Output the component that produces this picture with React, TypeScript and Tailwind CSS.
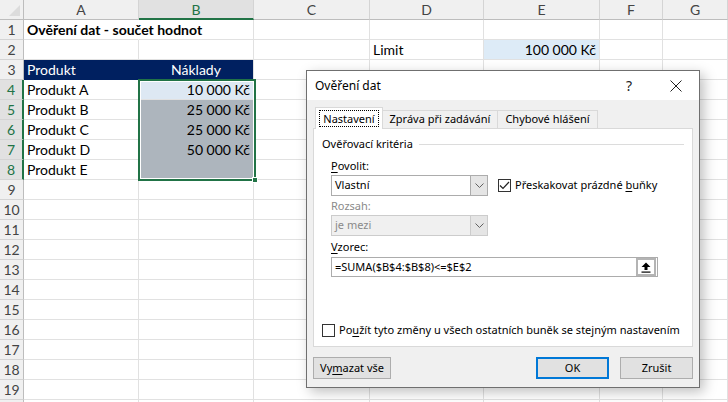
import React from 'react';

const COLS = ['A', 'B', 'C', 'D', 'E', 'F', 'G'];
const ROWS = Array.from({ length: 20 }, (_, i) => i + 1);
const SEL_ROWS = [4, 5, 6, 7, 8];

type Cell = { text?: string; cls?: string };

const cells: Record<string, Cell> = {
  A1: { text: 'Ověření dat - součet hodnot', cls: 'font-bold whitespace-nowrap overflow-visible border-r-transparent' },
  A3: { text: 'Produkt', cls: 'bg-[#002060] text-white border-r-[#002060] border-b-[#002060]' },
  B3: { text: 'Náklady', cls: 'bg-[#002060] text-white justify-center border-b-[#002060]' },
  A4: { text: 'Produkt A' },
  A5: { text: 'Produkt B' },
  A6: { text: 'Produkt C' },
  A7: { text: 'Produkt D' },
  A8: { text: 'Produkt E' },
  B4: { text: '10 000 Kč', cls: 'bg-[#dde8f3] justify-end' },
  B5: { text: '25 000 Kč', cls: 'bg-[#adb5bd] justify-end border-transparent' },
  B6: { text: '25 000 Kč', cls: 'bg-[#adb5bd] justify-end border-transparent' },
  B7: { text: '50 000 Kč', cls: 'bg-[#adb5bd] justify-end border-transparent' },
  B8: { cls: 'bg-[#adb5bd] border-transparent' },
  D2: { text: 'Limit' },
  E2: { text: '100 000 Kč', cls: 'bg-[#ddebf7] justify-end' },
};

function Sheet() {
  return (
    <div className="relative grid grid-cols-[24px_115px_115px_116px_114px_116px_63px_1fr] auto-rows-[20px] font-['Lato',sans-serif] text-[14px] text-black">
      <div className="relative border-r border-b border-[#bdbdbd] bg-[#f0f0f0]">
        <div className="absolute right-[3px] bottom-[3px] h-0 w-0 border-l-[11px] border-t-[11px] border-l-transparent border-t-transparent border-b-0 border-r-[11px] border-r-[#dcdcdc] border-b-transparent" />
      </div>
      {COLS.map((c) => (
        <div
          key={c}
          className={
            c === 'B'
              ? 'flex items-center justify-center border-r border-r-[#d4d4d4] border-b-2 border-b-[#217346] bg-[#e1e1e1] text-[#217346]'
              : 'flex items-center justify-center border-r border-r-[#d4d4d4] border-b border-b-[#bdbdbd] bg-[#f0f0f0] text-[#444]'
          }
        >
          {c}
        </div>
      ))}
      {ROWS.map((r) => {
        const sel = SEL_ROWS.includes(r);
        return (
          <React.Fragment key={r}>
            <div
              className={
                sel
                  ? 'flex items-center justify-center border-b border-b-[#d4d4d4] border-r-2 border-r-[#217346] bg-[#e1e1e1] text-[#217346]'
                  : 'flex items-center justify-center border-b border-b-[#d4d4d4] border-r border-r-[#bdbdbd] bg-[#f0f0f0] text-[#444]'
              }
            >
              {r < 20 ? r : ''}
            </div>
            {COLS.map((c) => {
              const cell = cells[c + r];
              return (
                <div
                  key={c}
                  className={`flex items-center border-r border-b border-[#e1e1e1] px-[3px] leading-none ${cell?.cls ?? ''}`}
                >
                  {cell?.text}
                </div>
              );
            })}
          </React.Fragment>
        );
      })}
      <div className="pointer-events-none absolute left-[138px] top-[79px] h-[102px] w-[118px] border-2 border-[#217346]">
        <div className="h-full w-full border border-white" />
        <div className="absolute -right-[4px] -bottom-[4px] h-[6px] w-[6px] border border-white bg-[#217346]" />
      </div>
    </div>
  );
}

function ChevronDown() {
  return (
    <svg width="9" height="6" viewBox="0 0 9 6" fill="none">
      <path d="M0.5 0.5 L4.5 4.5 L8.5 0.5" stroke="#606060" strokeWidth="1" />
    </svg>
  );
}

function CheckBox({ checked }: { checked?: boolean }) {
  return (
    <span className="flex h-[13px] w-[13px] shrink-0 items-center justify-center border border-[#333] bg-white">
      {checked && (
        <svg width="11" height="9" viewBox="0 0 11 9" fill="none">
          <path d="M1 4.5 L4 7.5 L10 1" stroke="#222" strokeWidth="1.2" />
        </svg>
      )}
    </span>
  );
}

function Dialog() {
  return (
    <div className="absolute left-[306px] top-[70px] flex h-[318px] w-[394px] flex-col border border-[#6f6f6f] bg-[#f0f0f0] font-['Noto_Sans',sans-serif] text-[11px] text-black shadow-[4px_4px_12px_rgba(0,0,0,0.25)]">
      <div className="flex h-[29px] items-center bg-white pl-[8px] text-[12px]">
        <span className="flex-1">Ověření dat</span>
        <span className="mr-[38px] text-[14px] text-[#222]">?</span>
        <svg className="mr-[17px]" width="12" height="12" viewBox="0 0 12 12">
          <path d="M0.5 0.5 L11.5 11.5 M11.5 0.5 L0.5 11.5" stroke="#222" strokeWidth="1" />
        </svg>
      </div>
      <div className="flex flex-col px-[6px] pt-[7px]">
        <div className="flex items-end pl-[2px]">
          <div className="relative z-10 -mb-px flex h-[22px] w-[68px] items-center justify-center border border-b-0 border-[#d9d9d9] bg-white">
            <span className="border border-dotted border-black px-[3px] leading-[15px]">Nastavení</span>
          </div>
          <div className="flex h-[18px] w-[115px] items-center justify-center border border-b-0 border-l-0 border-[#d9d9d9] bg-[#f0f0f0]">
            Zpráva při zadávání
          </div>
          <div className="flex h-[18px] w-[100px] items-center justify-center border border-b-0 border-l-0 border-[#d9d9d9] bg-[#f0f0f0]">
            Chybové hlášení
          </div>
        </div>
        <div className="flex h-[219px] flex-col border border-[#d9d9d9] bg-white px-[8px]">
          <div className="mt-[7px] flex h-[16px] items-center">
            <span className="mr-[6px]">Ověřovací kritéria</span>
            <div className="h-px flex-1 bg-[#dcdcdc]" />
          </div>
          <div className="mt-[6px] h-[16px] pl-[9px] leading-[16px]">
            <span className="underline underline-offset-2">P</span>ovolit:
          </div>
          <div className="mt-[1px] flex items-center pl-[9px]">
            <div className="flex h-[21px] w-[157px] items-center border border-[#acacac] bg-white">
              <span className="flex-1 pl-[3px]">Vlastní</span>
              <div className="flex h-full w-[17px] items-center justify-center border-l border-[#acacac] bg-[#e5e5e5]">
                <ChevronDown />
              </div>
            </div>
            <div className="ml-[10px] flex items-center gap-[4px]">
              <CheckBox checked />
              <span>
                Přeskakovat prázdné <span className="underline underline-offset-2">b</span>uňky
              </span>
            </div>
          </div>
          <div className="mt-[2px] h-[16px] pl-[9px] leading-[16px] text-[#8a8a8a]">Rozsah:</div>
          <div className="mt-[1px] pl-[9px]">
            <div className="flex h-[21px] w-[157px] items-center border border-[#cccccc] bg-[#f0f0f0] text-[#8a8a8a]">
              <span className="flex-1 pl-[3px]">je mezi</span>
              <div className="flex h-full w-[17px] items-center justify-center border-l border-[#cccccc] bg-[#e5e5e5]">
                <ChevronDown />
              </div>
            </div>
          </div>
          <div className="mt-[3px] h-[16px] pl-[9px] leading-[16px]">
            <span className="underline underline-offset-2">V</span>zorec:
          </div>
          <div className="mt-[2px] pl-[9px]">
            <div className="flex h-[20px] w-[327px] items-center border border-[#acacac] bg-white">
              <span className="flex-1 pl-[3px]">=SUMA($B$4:$B$8)&lt;=$E$2</span>
              <div className="mr-px flex h-[18px] w-[20px] items-center justify-center border-2 border-[#b4b4b4] bg-white">
                <svg width="10" height="11" viewBox="0 0 10 11">
                  <path d="M5 0.5 L9.5 5 L6.5 5 L6.5 8 L3.5 8 L3.5 5 L0.5 5 Z" fill="#000" />
                  <rect x="0.5" y="9.5" width="9" height="1.2" fill="#000" />
                </svg>
              </div>
            </div>
          </div>
          <div className="mt-auto mb-[8px] flex h-[16px] items-center gap-[4px] whitespace-nowrap">
            <CheckBox />
            <span>
              Po<span className="underline underline-offset-2">u</span>žít tyto změny u všech ostatních buněk se stejným nastavením
            </span>
          </div>
        </div>
        <div className="mt-[10px] flex items-center">
          <button className="h-[22px] w-[78px] border border-[#adadad] bg-[#e1e1e1]">
            Vy<span className="underline underline-offset-2">m</span>azat vše
          </button>
          <div className="flex-1" />
          <button className="h-[22px] w-[73px] border-2 border-[#0078d7] bg-[#e1e1e1]">OK</button>
          <button className="ml-[11px] h-[22px] w-[73px] border border-[#adadad] bg-[#e1e1e1]">Zrušit</button>
        </div>
      </div>
    </div>
  );
}

export default function App() {
  return (
    <div className="relative h-[402px] w-[728px] overflow-hidden bg-white">
      <Sheet />
      <Dialog />
    </div>
  );
}
